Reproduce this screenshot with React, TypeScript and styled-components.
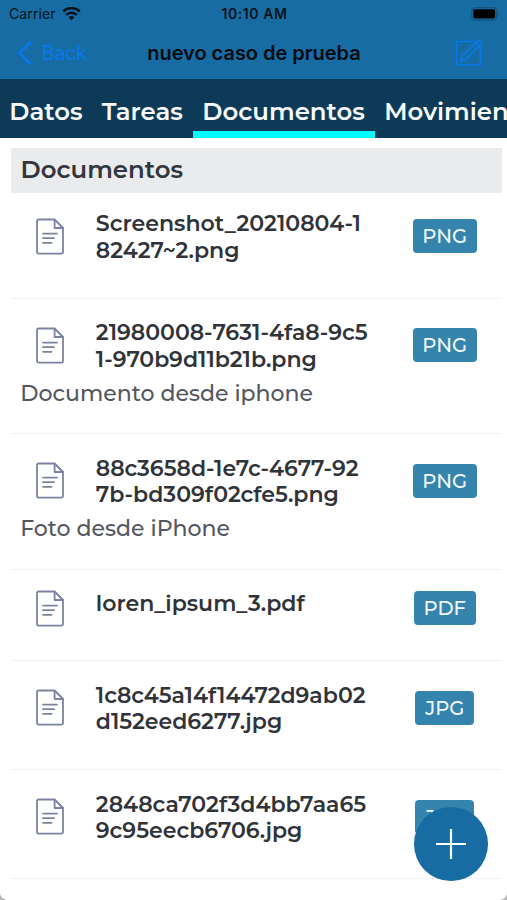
import React from 'react';
import styled, { createGlobalStyle } from 'styled-components';

const GlobalStyle = createGlobalStyle`
  * { box-sizing: border-box; }
  body { margin: 0; background: #fff; }
`;

const Screen = styled.div`
  position: relative;
  width: 507px;
  height: 900px;
  overflow: hidden;
  background: #fff;
  font-family: Montserrat, Inter, sans-serif;
  white-space: nowrap;
`;

const TopBar = styled.header`
  height: 79px;
  background: #176da3;
  color: #06121c;
  font-family: Inter, sans-serif;
`;

const StatusBar = styled.div`
  display: grid;
  grid-template-columns: 1fr auto 1fr;
  align-items: center;
  height: 27px;
  padding: 0 7px 0 9px;
  font-size: 14px;
`;

const Carrier = styled.div`
  display: flex;
  align-items: center;
  gap: 6.5px;
  letter-spacing: 0.1px;
`;

const Clock = styled.div`
  font-weight: 600;
  letter-spacing: 0.55px;
`;

const Battery = styled.svg`
  justify-self: end;
`;

const NavBar = styled.div`
  display: grid;
  grid-template-columns: 1fr auto 1fr;
  align-items: center;
  height: 51px;
  padding: 0 24px 0 25px;
`;

const BackButton = styled.div`
  display: flex;
  align-items: center;
  gap: 10px;
  margin-left: -8.5px;
  color: #0a78e8;
  font-size: 20px;
  letter-spacing: -0.45px;
`;

const NavTitle = styled.h1`
  margin: 0;
  color: #030a10;
  font-size: 20px;
  font-weight: 600;
  letter-spacing: -0.03px;
`;

const EditIcon = styled.svg`
  justify-self: end;
`;

const TabBar = styled.nav`
  display: flex;
  height: 58.5px;
  background: #0d3b57;
  overflow: hidden;
`;

const Tab = styled.div<{ $width: number; $active?: boolean }>`
  flex: none;
  width: ${p => p.$width}px;
  padding-left: 9.3px;
  border-bottom: 7px solid ${p => (p.$active ? '#00fdff' : 'transparent')};
  color: #f7fafc;
  font-size: 24.4px;
  font-weight: 600;
  line-height: 65px;
`;

const Content = styled.main`
  padding: 10.5px 5px 0 10.5px;
`;

const SectionTitle = styled.h2`
  margin: 0;
  height: 44.5px;
  padding-left: 10px;
  background: #e9ebed;
  color: #33363d;
  font-size: 24.4px;
  font-weight: 600;
  line-height: 43px;
`;

const Row = styled.article<{ $height: number; $first?: boolean }>`
  height: ${p => p.$height}px;
  padding-top: ${p => (p.$first ? 17 : 20)}px;
  border-bottom: 1.5px solid #f0f1f2;
`;

const RowMain = styled.div`
  display: grid;
  grid-template-columns: 85.3px 1fr 114.5px;
  min-height: 35px;
`;

const FileIcon = styled.svg`
  align-self: center;
  margin-left: 25.2px;
`;

const FileName = styled.div`
  margin: 1.5px 0 -1.5px;
  color: #303339;
  font-size: 22.05px;
  font-weight: 600;
  line-height: 26.5px;
`;

const BadgeCell = styled.div`
  display: flex;
  align-items: center;
  justify-content: center;
`;

const Badge = styled.span`
  height: 34px;
  padding: 0 9.7px;
  border-radius: 4px;
  background: #3584ad;
  color: #eef7fb;
  font-size: 19.5px;
  font-weight: 500;
  line-height: 34px;
`;

const Description = styled.p`
  margin: 0;
  padding-left: 9.7px;
  color: #54575f;
  font-size: 22.05px;
  font-weight: 500;
  line-height: 43px;
`;

const AddButton = styled.div`
  position: absolute;
  left: 414px;
  top: 807px;
  width: 73.5px;
  height: 73.5px;
  border-radius: 50%;
  background: #176da3;
  display: grid;
  place-items: center;
`;

const Corner = styled.svg<{ $side: 'left' | 'right' }>`
  position: absolute;
  bottom: 0;
  ${p => p.$side}: 0;
  transform: ${p => (p.$side === 'right' ? 'scaleX(-1)' : 'none')};
`;

interface Doc {
  height: number;
  name: string[];
  type: 'PNG' | 'PDF' | 'JPG';
  description?: string;
}

const docs: Doc[] = [
  { height: 106, type: 'PNG', name: ['Screenshot_20210804-1', '82427~2.png'] },
  { height: 135.5, type: 'PNG', name: ['21980008-7631-4fa8-9c5', '1-970b9d11b21b.png'], description: 'Documento desde iphone' },
  { height: 135.5, type: 'PNG', name: ['88c3658d-1e7c-4677-92', '7b-bd309f02cfe5.png'], description: 'Foto desde iPhone' },
  { height: 91.5, type: 'PDF', name: ['loren_ipsum_3.pdf'] },
  { height: 109, type: 'JPG', name: ['1c8c45a14f14472d9ab02', 'd152eed6277.jpg'] },
  { height: 109, type: 'JPG', name: ['2848ca702f3d4bb7aa65', '9c95eecb6706.jpg'] },
];

function DocumentGlyph() {
  return (
    <FileIcon width="29" height="37" viewBox="0 0 29 37" fill="none" stroke="#7b83a0" strokeWidth="1.8" strokeLinejoin="round" strokeLinecap="round">
      <path d="M2.6 1.5h16l8.4 8.5v24a1.6 1.6 0 0 1-1.6 1.6H2.6A1.6 1.6 0 0 1 1 34V3.1a1.6 1.6 0 0 1 1.6-1.6z" />
      <path d="M18.6 1.8V10H27" />
      <path d="M7 15.6h14M7 20.2h11M7 24.8h8.6" />
    </FileIcon>
  );
}

function DocumentRow({ doc, first }: { doc: Doc; first?: boolean }) {
  return (
    <Row $height={doc.height} $first={first}>
      <RowMain>
        <DocumentGlyph />
        <FileName>
          {doc.name.map(line => <div key={line}>{line}</div>)}
        </FileName>
        <BadgeCell>
          <Badge>{doc.type}</Badge>
        </BadgeCell>
      </RowMain>
      {doc.description && <Description>{doc.description}</Description>}
    </Row>
  );
}

export default function App() {
  return (
    <Screen>
      <GlobalStyle />
      <TopBar>
        <StatusBar>
          <Carrier>
            Carrier
            <svg width="19" height="14" viewBox="0 0 19 14" fill="none" stroke="#06121c" strokeWidth="2.6">
              <path d="M1.2 4.4a12 12 0 0 1 16.6 0" />
              <path d="M4.2 7.9a7.6 7.6 0 0 1 10.6 0" />
              <path d="M9.5 13.2L6.6 10.3a4.2 4.2 0 0 1 5.8 0z" fill="#06121c" stroke="none" />
            </svg>
          </Carrier>
          <Clock>10:10 AM</Clock>
          <Battery width="29" height="14" viewBox="0 0 29 14">
            <rect x="0.7" y="0.7" width="25" height="12.4" rx="3.6" fill="none" stroke="#12547e" strokeWidth="1.2" />
            <rect x="2.3" y="2.3" width="21.8" height="9.2" rx="2" fill="#000" />
            <path d="M27 4.6q2 2.3 0 4.6z" fill="#12547e" />
          </Battery>
        </StatusBar>
        <NavBar>
          <BackButton>
            <svg width="15" height="24" viewBox="0 0 15 24" fill="none" stroke="#0a78e8" strokeWidth="2.7" strokeLinecap="round" strokeLinejoin="round">
              <path d="M13 1.5L2.5 12L13 22.5" />
            </svg>
            Back
          </BackButton>
          <NavTitle>nuevo caso de prueba</NavTitle>
          <EditIcon width="28" height="28" viewBox="0 0 28 28" fill="none" stroke="#0a78e8" strokeWidth="1.6">
            <path d="M20.5 2.5H1.5V26h23.8V7.5" />
            <path d="M5.8 21.9l1.5-5L23.7 0.9l3.2 3.1L10.8 20.2z" />
            <path d="M21 3.7l3.2 3.2" />
          </EditIcon>
        </NavBar>
      </TopBar>
      <TabBar>
        <Tab $width={92.5}>Datos</Tab>
        <Tab $width={100.5}>Tareas</Tab>
        <Tab $width={182} $active>Documentos</Tab>
        <Tab $width={180}>Movimientos</Tab>
      </TabBar>
      <Content>
        <SectionTitle>Documentos</SectionTitle>
        {docs.map((doc, i) => (
          <DocumentRow key={doc.name[0]} doc={doc} first={i === 0} />
        ))}
      </Content>
      <AddButton>
        <svg width="32" height="32" viewBox="0 0 32 32" stroke="#fff" strokeWidth="2.2">
          <path d="M16 1v30M1 16h30" />
        </svg>
      </AddButton>
      <Corner $side="left" width="7" height="6" viewBox="0 0 7 6"><path d="M0 0Q1.5 4.5 6.5 6H0z" fill="#b9b9b9" /></Corner>
      <Corner $side="right" width="7" height="6" viewBox="0 0 7 6"><path d="M0 0Q1.5 4.5 6.5 6H0z" fill="#b9b9b9" /></Corner>
    </Screen>
  );
}
